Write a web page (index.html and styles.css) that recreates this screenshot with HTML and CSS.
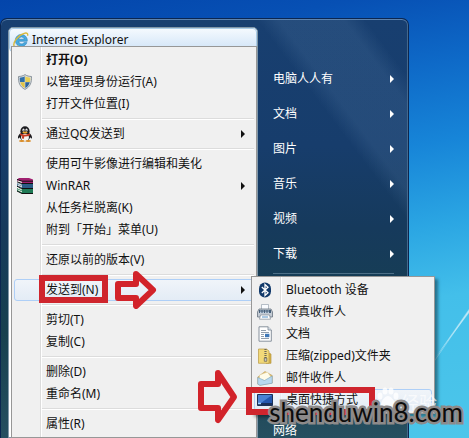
FILE: index.html
```html
<!DOCTYPE html>
<html lang="zh-CN">
<head>
  <meta charset="UTF-8">
  <meta name="viewport" content="width=device-width, initial-scale=1.0">
  <title>Internet Explorer</title>
  <link rel="stylesheet" href="styles.css">
</head>
<body>
  <div class="desktop">
    <svg class="streak" viewBox="0 0 60 130" aria-hidden="true">
      <path d="M60 1 L26 50 L60 5 Z" fill="#fff" opacity=".5"/>
      <path d="M60 3 L8 78" stroke="#fff" opacity=".3"/>
    </svg>

    <div class="start-menu">
      <div class="programs">
        <a class="pinned" href="#">
          <svg class="icon" viewBox="0 0 16 16">
            <path d="M14.2 9.3H5.6a3 3 0 0 0 5.5 1.3h2.8A6 6 0 1 1 14.3 8.2ZM5.6 7.2h5.8a3 3 0 0 0-5.8 0Z" fill="#45a9df" stroke="#2b7fb8" stroke-width=".6"/>
            <path d="M1.2 14.2C-.6 11 4.6 3.4 11.2 1.3c3-.9 4 .4 3.3 2.5" fill="none" stroke="#d9b93c" stroke-width="1.4"/>
            <path d="M1.2 14.2c.9 1 2.6.4 4-.5" fill="none" stroke="#d9b93c" stroke-width="1.2"/>
          </svg>
          <span>Internet Explorer</span>
        </a>

        <div class="menu context-menu">
          <button class="item bold"><span class="slot"></span>打开(O)</button>
          <button class="item">
            <span class="slot">
              <svg class="icon" viewBox="0 0 16 16">
                <path d="M8 .6C6 2 3.800 2.400 1.500 2.500c-.2 6 1 10.200 6.500 12.900 5.500-2.700 6.700-6.900 6.500-12.900C12.200 2.400 10 2 8 .6Z" fill="#d7dce0" stroke="#77838c" stroke-width=".8"/>
                <path d="M7.700 2.200C6 3.200 4.500 3.600 2.700 3.700c0 1.600.1 3 .4 4.200h4.600Z" fill="#2f6fa8"/>
                <path d="M8.300 2.200c1.700 1 3.200 1.400 5 1.500 0 1.600-.1 3-.4 4.200H8.300Z" fill="#e8cf53"/>
                <path d="M3.200 8.300c.8 2.700 2.200 4.500 4.500 5.800V8.300Z" fill="#e2c443"/>
                <path d="M12.800 8.300c-.8 2.700-2.200 4.500-4.500 5.800V8.300Z" fill="#2d639a"/>
              </svg>
            </span>以管理员身份运行(A)
          </button>
          <button class="item"><span class="slot"></span>打开文件位置(I)</button>
          <hr>
          <button class="item">
            <span class="slot">
              <svg class="icon" viewBox="0 0 16 16">
                <path d="M3.500 7C2 8.500.6 10.600 1 12.200c.5.600 1.400-.4 2-1.200M12.500 7c1.500 1.500 2.900 3.600 2.500 5.200-.5.600-1.400-.4-2-1.200" fill="#1b1b1f"/>
                <ellipse cx="8" cy="10.300" rx="5.200" ry="5" fill="#1b1b1f"/>
                <ellipse cx="8" cy="5.200" rx="4.600" ry="4.900" fill="#1b1b1f"/>
                <ellipse cx="8" cy="11.500" rx="3.900" ry="3.700" fill="#f5f5f5"/>
                <ellipse cx="6.500" cy="4" rx="1.100" ry="1.500" fill="#fff"/>
                <ellipse cx="9.500" cy="4" rx="1.100" ry="1.500" fill="#fff"/>
                <circle cx="6.900" cy="4.200" r=".5"/><circle cx="9.200" cy="4.200" r=".5"/>
                <ellipse cx="8" cy="6.500" rx="2.600" ry=".9" fill="#efa52b"/>
                <path d="M3.200 7.300c3 1.800 6.600 1.800 9.600 0l.4 1.900c-2 1-4 1.300-6 1.200l-.2 2.400-2-.2.100-2.600-2.200-.9Z" fill="#c83b25"/>
                <ellipse cx="4.800" cy="15" rx="2.800" ry="1" fill="#d98b24"/>
                <ellipse cx="11.200" cy="15" rx="2.800" ry="1" fill="#d98b24"/>
              </svg>
            </span>通过QQ发送到<i class="arrow"></i>
          </button>
          <hr>
          <button class="item"><span class="slot"></span>使用可牛影像进行编辑和美化</button>
          <button class="item">
            <span class="slot">
              <svg class="icon" viewBox="0 0 16 16">
                <path d="M0 1.500 2 0H12l4 1.500V5H5L0 3Z" fill="#a02070"/>
                <path d="M4.500 5.500H16V10H5L0 8V5Z" fill="#2b5d86"/>
                <path d="M4.500 10.500H16v5H5L0 13v-3Z" fill="#1f7a55"/>
                <path d="M0 1.500 5 3.200H16M0 3.800 5 5.500H16M0 8.300 5 10.500H16M0 13l5 2.500H16" fill="none" stroke="#111" stroke-width="1"/>
                <path d="M.5 2.800 5 4.400M.5 5.500 5 7.300M.5 7 5 8.900M.5 10 5 12M.5 11.700 5 13.900" stroke="#f4f2e8" stroke-width="1"/>
              </svg>
            </span>WinRAR<i class="arrow"></i>
          </button>
          <button class="item"><span class="slot"></span>从任务栏脱离(K)</button>
          <button class="item"><span class="slot"></span>附到「开始」菜单(U)</button>
          <hr>
          <button class="item"><span class="slot"></span>还原以前的版本(V)</button>
          <hr>
          <div class="has-submenu">
            <button class="item active"><span class="slot"></span>发送到(N)<i class="arrow"></i></button>
            <span class="mark mark-send"></span>
            <svg class="pointer pointer-send" viewBox="0 0 42 38" aria-hidden="true">
              <path d="M3 13H21V3L38 19 21 35V27H3Z"/>
            </svg>

            <div class="menu submenu">
              <button class="item">
                <span class="slot">
                  <svg class="icon" viewBox="0 0 16 16">
                    <rect x="2" y=".5" width="12" height="15" rx="6" fill="#123a6b"/>
                    <path d="M4.800 5 11 10.800 8 13.500V2.500L11 5.200 4.800 11" fill="none" stroke="#fff" stroke-width="1.300"/>
                  </svg>
                </span>Bluetooth 设备
              </button>
              <button class="item">
                <span class="slot">
                  <svg class="icon" viewBox="0 0 16 16">
                    <path d="M4.500.5h7V6h-7Z" fill="#fafcff" stroke="#9aa5b0" stroke-width=".7"/>
                    <path d="M2 5h12l1.500 3v5H.5V8Z" fill="#c3cbd4" stroke="#66727f" stroke-width=".8"/>
                    <path d="M2 6h12v3H2Z" fill="#465f79"/>
                    <path d="M3 7h1.500M5.500 7H7M8 7h1.500M10.500 7H12M3 8.500h1.500M5.500 8.500H7M8 8.500h1.500M10.500 8.500H12" stroke="#d7e9f7" stroke-width=".8"/>
                    <path d="M3.500 11h9l1 4.200h-11Z" fill="#fff" stroke="#7f8a95" stroke-width=".7"/>
                    <path d="M5 13h6" stroke="#5593c8"/>
                  </svg>
                </span>传真收件人
              </button>
              <button class="item">
                <span class="slot">
                  <svg class="icon" viewBox="0 0 16 16">
                    <path d="M2 .8h9L14.300 4v11.200H2Z" fill="#fff" stroke="#7b8793" stroke-width=".9"/>
                    <path d="M11 .8V4h3.300" fill="#dce5ed" stroke="#7b8793" stroke-width=".8"/>
                    <path d="M4 4.500h5M4 6.500h8M4 8.500h3M4 10.500h3M4 12.500h8" stroke="#8493a4" stroke-width=".9"/>
                    <path d="M8 7.800h4.400v3.400H8Z" fill="#3f78b8"/>
                  </svg>
                </span>文档
              </button>
              <button class="item">
                <span class="slot">
                  <svg class="icon" viewBox="0 0 16 16">
                    <path d="M9 3.500 14 6v9.300H9Z" fill="#d9b54e" stroke="#ad8b31" stroke-width=".6"/>
                    <path d="M1.500 1h8L12 3v12.300H1.500Z" fill="#f2d979" stroke="#b99a42" stroke-width=".7"/>
                    <path d="M8.500 1v9" stroke="#6d6857" stroke-width="2.200" stroke-dasharray="1 1"/>
                    <path d="M7.300 10h2.500v3.300H7.300Z" fill="#c9c9c3" stroke="#68614a" stroke-width=".7"/>
                  </svg>
                </span>压缩(zipped)文件夹
              </button>
              <button class="item">
                <span class="slot">
                  <svg class="icon" viewBox="0 0 16 16">
                    <path d="M.8 7 8 1.500 15.200 5.500V13L3 15.200.8 14Z" fill="#e3bd66" stroke="#b89a5a" stroke-width=".6"/>
                    <path d="M2.500 5 10.500 2 14 7 8 11 2.500 9Z" fill="#fffbe8" stroke="#dccb94" stroke-width=".5"/>
                    <path d="M.8 7.500 7.500 10.500 15.200 6v7.200L3 15.300.8 14.200Z" fill="#b8d8ee" stroke="#7aa6c4" stroke-width=".6"/>
                  </svg>
                </span>邮件收件人
              </button>
              <button class="item active">
                <span class="slot">
                  <svg class="icon" viewBox="0 0 16 16">
                    <path d="M.5 2.500h15v11H.5Z" fill="#2456ad" stroke="#1c3157"/>
                    <path d="M1 3h14L4 11H1Z" fill="#4a82d4"/>
                    <path d="M1 12h14" stroke="#14233f" stroke-width="1.500"/>
                    <path d="M1 11.500h3" stroke="#9fd0ff" stroke-width="1.500"/>
                  </svg>
                </span>桌面快捷方式
              </button>
              <span class="mark mark-desktop"></span>
              <svg class="pointer pointer-desktop" viewBox="0 0 42 56" aria-hidden="true">
                <path d="M4 15H21V4L37 28 21 51V39H4Z"/>
              </svg>
            </div>
          </div>
          <hr>
          <button class="item"><span class="slot"></span>剪切(T)</button>
          <button class="item"><span class="slot"></span>复制(C)</button>
          <hr>
          <button class="item"><span class="slot"></span>删除(D)</button>
          <button class="item"><span class="slot"></span>重命名(M)</button>
          <hr>
          <button class="item"><span class="slot"></span>属性(R)</button>
        </div>
      </div>

      <nav class="places">
        <a href="#">电脑人人有<i class="arrow"></i></a>
        <a href="#">文档<i class="arrow"></i></a>
        <a href="#">图片<i class="arrow"></i></a>
        <a href="#">音乐<i class="arrow"></i></a>
        <a href="#">视频<i class="arrow"></i></a>
        <a href="#">下载<i class="arrow"></i></a>
        <a class="network" href="#">网络</a>
      </nav>
    </div>

    <div class="paw-mark">
      <svg class="paw" viewBox="0 0 22 22" aria-hidden="true">
        <ellipse cx="3" cy="9" rx="2.500" ry="3.500"/><ellipse cx="8" cy="4" rx="2.500" ry="3.500"/>
        <ellipse cx="14" cy="4" rx="2.500" ry="3.500"/><ellipse cx="19" cy="9" rx="2.500" ry="3.500"/>
        <path d="M11 9c3 0 7 5 7 8.500S14 21 11 21s-7 0-7-3.500S8 9 11 9Z"/>
      </svg>
      <span>经验</span>
    </div>
    <div class="site-mark">shenduwin8.com</div>
  </div>
</body>
</html>
```
FILE: styles.css
```css
body {
  margin: 0;
  font-family: "Noto Sans", "Noto Sans CJK SC", sans-serif;
  font-size: 12px;
  line-height: 20px;
  color: #111;
}
.desktop {
  position: relative;
  display: flex;
  box-sizing: border-box;
  min-height: 100vh;
  padding: 18px 60px 0 0;
  overflow: hidden;
  background: linear-gradient(170deg, #0345ab 0%, #0750b4 12%, #0e6ac8 27%, #1785d8 42%, #2ba6e3 58%, #43bfea 72%, #4cc6ea 100%);
}
.streak {
  position: absolute;
  right: 0;
  bottom: 0;
  width: 60px;
  height: 130px;
}
.start-menu {
  flex: 1;
  display: flex;
  padding: 8px 8px 0 7px;
  border: 1px solid #0b2650;
  border-bottom: none;
  border-radius: 7px 7px 0 0;
  box-shadow: inset 0 1px 0 #5d83ae, inset -1px 0 0 #46698b;
  background:
    linear-gradient(53deg, transparent 79%, rgba(120, 160, 200, 0.14) 82%, rgba(120, 160, 200, 0.14) 91%, transparent 94%),
    linear-gradient(#183f70 0%, #173d6c 30%, #163a5c 50%, #17404f 75%, #264f60 100%);
}
.programs {
  position: relative;
  flex: 0 0 250px;
  box-sizing: border-box;
  border: 1px solid #8197a8;
  border-radius: 5px 5px 0 0;
  background: #fff;
}
.pinned {
  display: flex;
  align-items: center;
  gap: 3px;
  height: 22px;
  padding: 0 3px;
  border: 1px solid #a9cbe6;
  border-radius: 4px;
  background: linear-gradient(#f4f9fe, #cfe3f7);
  color: #111;
  text-decoration: none;
}
.icon {
  display: block;
  width: 16px;
  height: 16px;
}

/* menus */
.menu {
  position: absolute;
  box-sizing: border-box;
  padding: 2px;
  border: 1px solid #979797;
  background: linear-gradient(90deg, transparent 28px, #dcdcdc 28px, #dcdcdc 29px, #fff 29px, #fff 30px, transparent 30px) #f0f0f0;
}
.context-menu {
  top: 18px;
  left: 2px;
  right: 0;
}
.submenu {
  top: -3px;
  left: 237px;
  width: 184px;
  box-shadow: 3px 3px 3px rgba(0, 0, 0, 0.4);
}
.item {
  display: flex;
  align-items: center;
  box-sizing: border-box;
  width: 100%;
  height: 22px;
  padding: 0 8px 0 0;
  border: 1px solid transparent;
  border-radius: 3px;
  background: none;
  font: inherit;
  color: inherit;
  text-align: left;
  white-space: nowrap;
}
.item.bold {
  font-weight: bold;
}
.item.active {
  border-color: #aecff7;
  background: linear-gradient(rgba(240, 246, 253, 0.7), rgba(222, 234, 248, 0.7));
}
.slot {
  flex: 0 0 28px;
  box-sizing: border-box;
  height: 16px;
  padding-left: 2px;
  margin-right: 3px;
}
.menu hr {
  height: 1px;
  margin: 3px 0 3px 28px;
  border: none;
  border-bottom: 1px solid #fff;
  background: #dcdcdc;
}
.arrow {
  margin-left: auto;
  border: 4px solid transparent;
  border-left-color: currentColor;
  border-right: none;
}
.has-submenu {
  position: relative;
}

/* start menu right column */
.places {
  flex: 1;
  padding: 34px 0 0 5px;
}
.places a {
  display: flex;
  align-items: center;
  height: 35px;
  padding: 0 6px 0 10px;
  color: #fff;
  text-decoration: none;
}
.places .network {
  height: 14px;
  margin: 2px 6px 0 10px;
  padding: 150px 0 0;
  border-top: 1px solid #4d7088;
  line-height: 14px;
}

/* red marks */
.mark {
  position: absolute;
  box-sizing: border-box;
  border: 6px solid #cf252d;
}
.mark-send {
  top: -4px;
  left: 25px;
  width: 69px;
  height: 28px;
}
.mark-desktop {
  left: -6px;
  bottom: -2px;
  width: 129px;
  height: 28px;
}
.pointer {
  position: absolute;
  fill: none;
  stroke: #d2232a;
  stroke-width: 6;
  stroke-linejoin: round;
}
.pointer-send {
  top: -8px;
  left: 101px;
  width: 42px;
  height: 38px;
}
.pointer-desktop {
  left: -55px;
  bottom: -12px;
  width: 42px;
  height: 56px;
}

/* watermarks */
.paw-mark {
  position: absolute;
  right: 32px;
  bottom: 25px;
  display: flex;
  align-items: flex-end;
  gap: 2px;
  color: rgba(255, 255, 255, 0.7);
  font-size: 18px;
}
.paw {
  width: 22px;
  height: 22px;
  margin-bottom: 4px;
  fill: rgba(255, 255, 255, 0.8);
}
.site-mark {
  position: absolute;
  right: 6px;
  bottom: 8px;
  font-family: Lato, "Open Sans", sans-serif;
  font-size: 26px;
  line-height: 36px;
  color: #0c0c0c;
  -webkit-text-stroke: 5px #8d8a8a;
  paint-order: stroke fill;
}
```
